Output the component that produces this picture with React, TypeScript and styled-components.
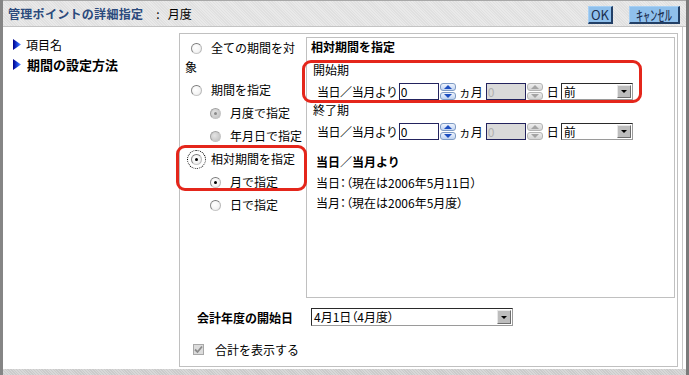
import React from 'react';
import styled, { createGlobalStyle, css } from 'styled-components';

const GlobalStyle = createGlobalStyle`
  html, body { margin: 0; padding: 0; background: #fff; }
  body {
    font-family: "Noto Sans CJK JP", "Noto Sans", sans-serif;
    font-size: 12px;
    color: #000;
  }
  * { box-sizing: border-box; }
`;

const Frame = styled.div`
  position: relative;
  width: 689px;
  height: 375px;
  border-left: 3px solid #858585;
  border-right: 3px solid #7a7a7a;
  background: #fff;
  display: flex;
  flex-direction: column;
  overflow: hidden;
`;

const Header = styled.div`
  height: 27px;
  flex: none;
  display: flex;
  align-items: center;
  padding: 0 6px 0 5px;
  border-top: 1px solid #a8a8a8;
  border-bottom: 1px solid #c4c4c4;
  background-color: #e5e5e5;
  background-image: repeating-linear-gradient(45deg, #e9e9e9 0 1px, #e0e0e0 1px 2px);
`;

const Title = styled.span`
  color: #2b4a7c;
  font-weight: 700;
  font-size: 12px;
  letter-spacing: 0.3px;
`;

const Sep = styled.span`
  margin-left: 13px;
  margin-right: 8px;
`;

const HeaderButtons = styled.div`
  margin-left: auto;
  display: flex;
  gap: 16px;
  align-items: center;
`;

const HButton = styled.button<{ $w: number; $fs?: number }>`
  width: ${p => p.$w}px;
  height: 18px;
  padding: 0;
  margin-top: 3px;
  font-family: inherit;
  font-size: ${p => p.$fs ?? 13}px;
  font-weight: 400;
  line-height: 16px;
  color: #1b2d4e;
  background: #8fc0ec;
  border: 1px solid;
  border-color: #a8d0f4 #223f66 #223f66 #a8d0f4;
  border-right-width: 2px;
  border-bottom-width: 2px;
  cursor: pointer;
`;

const Body = styled.div`
  flex: 1;
  display: flex;
  margin-right: 3px;
  border-right: 1px solid #c8c8c8;
`;

const Nav = styled.div`
  width: 176px;
  flex: none;
  padding: 7px 0 0 10px;
`;

const NavItem = styled.div<{ $bold?: boolean }>`
  display: flex;
  align-items: center;
  height: 20px;
  gap: ${p => (p.$bold ? 6 : 5)}px;
  font-weight: ${p => (p.$bold ? 700 : 400)};
  font-size: ${p => (p.$bold ? 13 : 12)}px;
`;

const OuterBox = styled.div`
  margin-top: 6px;
  width: 499px;
  height: 334px;
  border: 1px solid #c0c0c0;
  display: flex;
  flex-direction: column;
`;

const TopRow = styled.div`
  display: flex;
  height: 264px;
`;

const RadioColumn = styled.div`
  width: 126px;
  padding: 4px 3px 0 5px;
`;

const RadioItem = styled.div<{ $sub?: boolean; $gapTop?: number }>`
  line-height: 19px;
  margin-bottom: 4px;
  margin-top: ${p => p.$gapTop ?? 0}px;
  padding-left: ${p => (p.$sub ? 19 : 0)}px;
`;

const RadioDot = styled.span<{ $checked?: boolean; $disabled?: boolean; $focus?: boolean }>`
  display: inline-block;
  position: relative;
  width: 11px;
  height: 11px;
  margin: 0 9px 0 6px;
  vertical-align: -1px;
  border-radius: 50%;
  border: 1px solid #8a8a8a;
  border-color: #7a7a7a #b8b8b8 #c8c8c8 #8a8a8a;
  background: radial-gradient(circle at 40% 40%, #ffffff 0%, #f4f4f4 60%, #dcdcdc 100%);
  ${p =>
    p.$disabled &&
    css`
      border-color: #a0a0a0 #c4c4c4 #c4c4c4 #a0a0a0;
      background: radial-gradient(circle at 40% 40%, #e4e4e4 0%, #c8c8c8 70%, #b4b4b4 100%);
    `}
  ${p =>
    p.$focus &&
    css`
      outline: 1px dotted #000;
      outline-offset: 3px;
    `}
  &::after {
    content: '';
    display: ${p => (p.$checked ? 'block' : 'none')};
    position: absolute;
    left: 3px;
    top: 3px;
    width: 3px;
    height: 3px;
    border-radius: 50%;
    background: ${p => (p.$disabled ? '#8a8a8a' : '#000')};
  }
`;

const InnerBox = styled.div`
  margin-top: 3px;
  width: 369px;
  height: 261px;
  border: 1px solid #c0c0c0;
  padding-left: 4px;
`;

const BoxTitle = styled.div`
  font-weight: 700;
  line-height: 18px;
`;

const SubLabel = styled.div`
  line-height: 18px;
  padding-left: 2px;
  margin-top: 5px;
`;

const EndLabel = styled.div`
  line-height: 18px;
  padding-left: 2px;
`;

const FieldRow = styled.div`
  display: flex;
  align-items: center;
  height: 20px;
  margin-top: 2px;
  padding-left: 6px;
`;

const RowLabel = styled.span`
  letter-spacing: -0.45px;
  margin-right: 1px;
`;

const NumInput = styled.div<{ $disabled?: boolean }>`
  width: 40px;
  height: 17px;
  border: 1px solid #23235e;
  background: ${p => (p.$disabled ? '#dadada' : '#fff')};
  color: ${p => (p.$disabled ? '#b0b0b0' : '#000')};
  font-size: 12px;
  line-height: 15px;
  padding-left: 1px;
`;

const Spinner = styled.div`
  width: 16px;
  height: 17px;
  margin-left: 1px;
  display: flex;
  flex-direction: column;
  gap: 1px;
`;

const SpinBtn = styled.div<{ $down?: boolean; $disabled?: boolean }>`
  flex: 1;
  border-radius: 3px;
  border: 1px solid ${p => (p.$disabled ? '#b4b4b4' : '#7f9bc4')};
  background: ${p =>
    p.$disabled
      ? 'linear-gradient(#eeeeee, #d4d4d4)'
      : 'linear-gradient(#eef4fe, #c2d4f0)'};
  display: flex;
  align-items: center;
  justify-content: center;
  &::after {
    content: '';
    width: 0;
    height: 0;
    border-left: 4px solid transparent;
    border-right: 4px solid transparent;
    ${p =>
      p.$down
        ? css`border-top: 4px solid ${p.$disabled ? '#a4a4a4' : '#1e4fc0'};`
        : css`border-bottom: 4px solid ${p.$disabled ? '#a4a4a4' : '#1e4fc0'};`}
  }
`;

const Unit = styled.span<{ $ml: number; $mr: number }>`
  margin-left: ${p => p.$ml}px;
  margin-right: ${p => p.$mr}px;
`;

const SelectBox = styled.div<{ $w: number; $h: number }>`
  width: ${p => p.$w}px;
  height: ${p => p.$h}px;
  display: flex;
  border: 1px solid;
  border-color: #2a2a2a #9a9a9a #9a9a9a #2a2a2a;
  background: #fff;
  font-feature-settings: "palt";
`;

const SelectText = styled.span`
  flex: 1;
  padding-left: 2px;
  line-height: 15px;
  white-space: nowrap;
  overflow: hidden;
`;

const DropBtn = styled.span`
  width: 14px;
  margin: 1px;
  background: #bdbdbd;
  border: 1px solid;
  border-color: #e8e8e8 #6e6e6e #6e6e6e #e8e8e8;
  display: flex;
  align-items: center;
  justify-content: center;
  &::after {
    content: '';
    border-left: 3px solid transparent;
    border-right: 3px solid transparent;
    border-top: 3px solid #000;
  }
`;

const Section2Title = styled.div`
  font-weight: 700;
  line-height: 18px;
  margin-top: 12px;
  padding-left: 5px;
`;

const InfoLine = styled.div`
  line-height: 20px;
  padding-left: 5px;
  font-feature-settings: "palt";
`;

const InfoLines = styled.div`
  margin-top: 2px;
`;

const Bottom = styled.div`
  padding-top: 10px;
`;

const FiscalRow = styled.div`
  display: flex;
  align-items: center;
  height: 18px;
  padding-left: 17px;
`;

const FiscalLabel = styled.span`
  font-weight: 700;
  margin-right: 18px;
`;

const CheckRow = styled.div`
  display: flex;
  align-items: center;
  height: 19px;
  margin-top: 14px;
  padding-left: 13px;
  gap: 11px;
`;

const CheckBoxBox = styled.span`
  width: 11px;
  height: 11px;
  border: 1px solid #a8a8a8;
  background: #dcdcdc;
  display: flex;
  align-items: center;
  justify-content: center;
`;

const BottomBand = styled.div`
  height: 6px;
  flex: none;
  background-color: #d2d2d2;
  background-image: repeating-linear-gradient(45deg, #d8d8d8 0 1px, #cbcbcb 1px 2px);
`;

const RedMark = styled.div<{ $x: number; $y: number; $w: number; $h: number }>`
  position: absolute;
  left: ${p => p.$x - 3}px;
  top: ${p => p.$y}px;
  width: ${p => p.$w}px;
  height: ${p => p.$h}px;
  border: 3px solid #e4261b;
  border-radius: 9px;
  pointer-events: none;
`;

const NavArrow = () => (
  <svg width="8" height="11" viewBox="0 0 8 11">
    <defs>
      <linearGradient id="navg" x1="0" y1="0" x2="1" y2="0">
        <stop offset="0" stopColor="#00008c" />
        <stop offset="0.6" stopColor="#1f4fe6" />
        <stop offset="1" stopColor="#6a90ff" />
      </linearGradient>
    </defs>
    <polygon points="0,0 8,5.5 0,11" fill="url(#navg)" />
  </svg>
);

const Spin = ({ disabled }: { disabled?: boolean }) => (
  <Spinner>
    <SpinBtn $disabled={disabled} />
    <SpinBtn $down $disabled={disabled} />
  </Spinner>
);

const PeriodRow = () => (
  <FieldRow>
    <RowLabel>当日／当月より</RowLabel>
    <NumInput>0</NumInput>
    <Spin />
    <Unit $ml={3} $mr={3}>ヵ月</Unit>
    <NumInput $disabled>0</NumInput>
    <Spin disabled />
    <Unit $ml={4} $mr={2}>日</Unit>
    <SelectBox $w={72} $h={17}>
      <SelectText>前</SelectText>
      <DropBtn />
    </SelectBox>
  </FieldRow>
);

export default function App() {
  return (
    <>
      <GlobalStyle />
      <Frame>
        <Header>
          <Title>管理ポイントの詳細指定</Title>
          <Sep>:</Sep>
          <span>月度</span>
          <HeaderButtons>
            <HButton $w={25}>OK</HButton>
            <HButton $w={51} $fs={14.5}>ｷｬﾝｾﾙ</HButton>
          </HeaderButtons>
        </Header>
        <Body>
          <Nav>
            <NavItem>
              <NavArrow />
              <span>項目名</span>
            </NavItem>
            <NavItem $bold>
              <NavArrow />
              <span>期間の設定方法</span>
            </NavItem>
          </Nav>
          <OuterBox>
            <TopRow>
              <RadioColumn>
                <RadioItem>
                  <RadioDot />全ての期間を対象
                </RadioItem>
                <RadioItem>
                  <RadioDot />期間を指定
                </RadioItem>
                <RadioItem $sub>
                  <RadioDot $disabled $checked />月度で指定
                </RadioItem>
                <RadioItem $sub>
                  <RadioDot $disabled />年月日で指定
                </RadioItem>
                <RadioItem $gapTop={2}>
                  <RadioDot $checked $focus />相対期間を指定
                </RadioItem>
                <RadioItem $sub>
                  <RadioDot $checked />月で指定
                </RadioItem>
                <RadioItem $sub>
                  <RadioDot />日で指定
                </RadioItem>
              </RadioColumn>
              <InnerBox>
                <BoxTitle>相対期間を指定</BoxTitle>
                <SubLabel>開始期</SubLabel>
                <PeriodRow />
                <EndLabel>終了期</EndLabel>
                <PeriodRow />
                <Section2Title>当日／当月より</Section2Title>
                <InfoLines>
                  <InfoLine>当日：（現在は2006年5月11日）</InfoLine>
                  <InfoLine>当月：（現在は2006年5月度）</InfoLine>
                </InfoLines>
              </InnerBox>
            </TopRow>
            <Bottom>
              <FiscalRow>
                <FiscalLabel>会計年度の開始日</FiscalLabel>
                <SelectBox $w={202} $h={18}>
                  <SelectText>4月1日（4月度）</SelectText>
                  <DropBtn />
                </SelectBox>
              </FiscalRow>
              <CheckRow>
                <CheckBoxBox>
                  <svg width="9" height="9" viewBox="0 0 9 9">
                    <path d="M1 4.5 L3.5 7 L8 1.5" fill="none" stroke="#8c8c8c" strokeWidth="1.8" />
                  </svg>
                </CheckBoxBox>
                <span>合計を表示する</span>
              </CheckRow>
            </Bottom>
          </OuterBox>
        </Body>
        <BottomBand />
        <RedMark $x={176} $y={145} $w={131} $h={46} />
        <RedMark $x={302} $y={60} $w={340} $h={43} />
      </Frame>
    </>
  );
}
